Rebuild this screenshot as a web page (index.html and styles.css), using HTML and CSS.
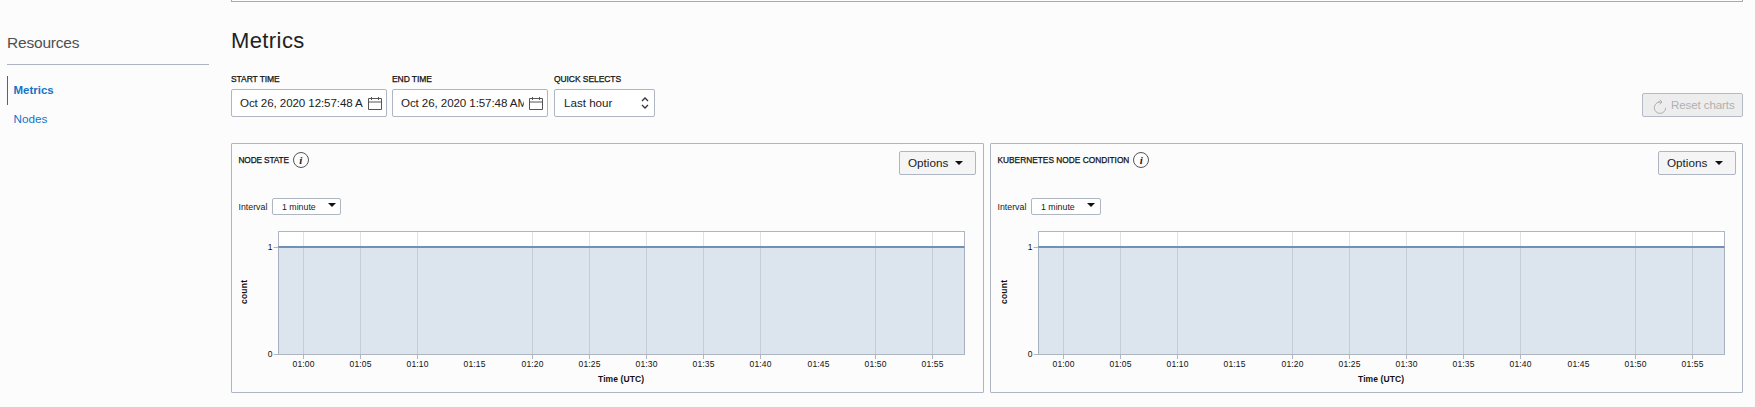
FILE: index.html
```html
<!DOCTYPE html>
<html lang="en">
<head>
<meta charset="utf-8">
<title>Metrics</title>
<link rel="stylesheet" href="styles.css">
</head>
<body>
<div class="page">
  <aside class="sidebar">
    <h2 class="sidebar-title">Resources</h2>
    <nav class="nav">
      <a class="nav-item active">Metrics</a>
      <a class="nav-item">Nodes</a>
    </nav>
  </aside>
  <main class="main">
    <div class="panel-end"></div>
    <h1 class="title">Metrics</h1>
    <div class="toolbar">
      <div class="field">
        <label class="label">START TIME</label>
        <div class="input"><span class="value">Oct 26, 2020 12:57:48 A</span><svg class="cal" width="14" height="13" viewBox="0 0 14 13"><path d="M.5 1.5h13v11H.5zM.5 5h13M3.5 0v3M10.5 0v3"/></svg></div>
      </div>
      <div class="field">
        <label class="label">END TIME</label>
        <div class="input"><span class="value">Oct 26, 2020 1:57:48 AM</span><svg class="cal" width="14" height="13" viewBox="0 0 14 13"><path d="M.5 1.5h13v11H.5zM.5 5h13M3.5 0v3M10.5 0v3"/></svg></div>
      </div>
      <div class="field quick">
        <label class="label">QUICK SELECTS</label>
        <div class="input select"><span class="value">Last hour</span><svg class="updown" width="8" height="12" viewBox="0 0 8 12"><path d="M1 4l3-3 3 3M1 8l3 3 3-3"/></svg></div>
      </div>
      <button class="reset"><svg width="14" height="15" viewBox="0 0 14 15"><path d="M7 3a5.7 5.7 0 1 0 5.7 5.7M4.9 3H9M6.6.6L9 3 6.6 5.4"/></svg><span>Reset charts</span></button>
    </div>
    <div class="charts">
      <section class="card">
        <header class="card-head">
          <h3 class="card-title">NODE STATE</h3><span class="info">i</span>
          <button class="options"><span>Options</span><i class="caret"></i></button>
        </header>
        <div class="interval"><span>Interval</span><div class="mini"><span>1 minute</span><i class="caret"></i></div></div>
        <svg class="chart" width="751" height="166"></svg>
      </section>
      <section class="card second">
        <header class="card-head">
          <h3 class="card-title">KUBERNETES NODE CONDITION</h3><span class="info">i</span>
          <button class="options"><span>Options</span><i class="caret"></i></button>
        </header>
        <div class="interval"><span>Interval</span><div class="mini"><span>1 minute</span><i class="caret"></i></div></div>
        <svg class="chart" width="751" height="166"></svg>
      </section>
    </div>
  </main>
</div>
<script src="charts.js"></script>
</body>
</html>
```
FILE: styles.css
```css
* { box-sizing: border-box; }
body { margin: 0; background: #fcfcfc; color: #222; font-family: "Liberation Sans", Arial, sans-serif; overflow: hidden; }
h1, h2, h3 { margin: 0; font-weight: 400; }
button { font-family: inherit; margin: 0; }
.page { display: flex; height: 407px; padding-left: 7px; padding-right: 12px; }
.sidebar { width: 202px; margin-right: 22px; padding-top: 32px; }
.sidebar-title { height: 33px; line-height: 22px; border-bottom: 1px solid #adb5c0; font-size: 15.5px; letter-spacing: -.2px; color: #505050; }
.nav { display: flex; flex-direction: column; margin-top: 11px; }
.nav-item { height: 29px; line-height: 27px; padding-left: 6.5px; font-size: 11.7px; color: #1474c8; }
.active { font-weight: 700; border-left: 1px solid #1474c8; padding-left: 5.5px; font-size: 11.5px; line-height: 29px; }
.main { flex: 1; display: flex; flex-direction: column; }
.panel-end { height: 2px; border: 1px solid #aaa; border-top: 0; }
.title { margin-top: 24px; height: 28px; line-height: 29px; font-size: 22px; letter-spacing: .4px; color: #222; }
.toolbar { display: flex; height: 64px; margin-top: 20px; }
.field { width: 156px; margin-right: 5px; }
.quick { width: 101px; margin-left: 1px; }
.label { display: block; height: 15px; line-height: 11px; font-size: 8.5px; letter-spacing: -.08px; color: #111; -webkit-text-stroke: .25px #111; white-space: nowrap; }
.input { display: flex; align-items: center; height: 28px; border: 1px solid #aeb6c2; border-radius: 2px; background: #fff; padding: 0 4px 0 8px; font-size: 11.6px; }
.value { flex: 1; width: 122px; overflow: hidden; white-space: nowrap; margin-right: 5px; padding-bottom: 2px; letter-spacing: -.1px; }
.cal { fill: none; stroke: #555; flex: none; }
.select { padding-left: 9px; padding-right: 5px; }
.select .value { letter-spacing: 0; }
.updown { fill: none; stroke: #333; stroke-width: 1.3; }
.reset { display: flex; align-items: center; margin-left: auto; margin-top: 19px; width: 101px; height: 24px; padding: 0 0 0 10px; gap: 4px; border: 1px solid #b4bbc6; border-radius: 2px; background: #ededed; color: #b0b0b0; font-size: 11.5px; letter-spacing: -.08px; white-space: nowrap; }
.reset svg { fill: none; stroke: #b0b0b0; flex: none; margin-top: 2px; }
.charts { display: flex; gap: 6px; margin-top: 5px; }
.card { width: 753px; height: 250px; border: 1px solid #aeb6c2; border-radius: 1px; overflow: hidden; }
.card-head { display: flex; align-items: flex-start; height: 54px; padding: 7px 7px 0 6.5px; }
.card-title { font-size: 8.3px; line-height: 18px; letter-spacing: -.14px; color: #111; -webkit-text-stroke: .25px #111; white-space: nowrap; }
.info { width: 16px; height: 16px; margin: 1px 0 0 4px; border: 1px solid #555; border-radius: 50%; font: italic bold 11px/14px "Liberation Serif", serif; text-align: center; }
.options { margin-left: auto; display: flex; align-items: center; justify-content: space-between; width: 77px; height: 24px; border: 1px solid #aeb6c2; border-radius: 2px; background: #f5f5f5; padding: 0 12px 0 8px; font-size: 11.7px; color: #222; }
.options span { padding-bottom: 2px; }
.second .card-head { padding-right: 6px; }
.second .card-title { letter-spacing: .02px; }
.second .options { width: 78px; }
.caret { border: 4px solid transparent; border-top-color: #111; border-bottom: 0; }
.interval { display: flex; align-items: center; height: 17px; margin-left: 6px; font-size: 8.8px; }
.interval > span { width: 34px; padding-left: .5px; }
.mini { display: flex; align-items: center; justify-content: space-between; width: 69px; height: 17px; border: 1px solid #aeb6c2; border-radius: 2px; background: #fff; padding: 0 4px 0 9px; }
.second .mini { width: 70px; padding-right: 5px; }
.mini .caret { margin-top: -3px; }
.chart { display: block; margin-top: 10px; }
.chart text { font-size: 8.5px; fill: #111; }
.chart .bold { font-weight: 700; }
.plot { fill: #fff; stroke: #aeb6c2; }
.grid { stroke: #e2e2e2; }
.tick { stroke: #aeb6c2; }
.area { fill: #5078a8; fill-opacity: .2; }
.series { stroke: #7090b8; stroke-width: 2; }
```
FILE: charts.js
```javascript
const NS = 'http://www.w3.org/2000/svg';
document.querySelectorAll('.chart').forEach((svg, n) => {
  const left = n ? 47.5 : 46.5;
  const add = (name, attrs, text) => {
    const el = document.createElementNS(NS, name);
    for (const key in attrs) el.setAttribute(key, attrs[key]);
    if (text) el.textContent = text;
    svg.appendChild(el);
  };
  const line = (cls, x1, y1, x2, y2) => add('line', { class: cls, x1, y1, x2, y2 });
  add('rect', { class: 'plot', x: left, y: 6.5, width: 686, height: 123 });
  for (let i = 0; i < 12; i++) {
    const x = Math.floor(left + 24.8 + i * 57.2) + 0.5;
    if (i !== 3 && i !== 9) {
      line('grid', x, 7, x, 129);
      line('tick', x, 130, x, 134);
    }
    add('text', { x: x, y: 142, 'text-anchor': 'middle', textLength: 22 }, '01:' + String(i * 5).padStart(2, '0'));
  }
  add('rect', { class: 'area', x: left, y: 22, width: 686, height: 107 });
  line('series', left - 0.5, 22, left + 686, 22);
  line('tick', left - 5, 22.5, left, 22.5);
  line('tick', left - 5, 129.5, left, 129.5);
  add('text', { x: left - 6, y: 25, 'text-anchor': 'end' }, '1');
  add('text', { x: left - 6, y: 132, 'text-anchor': 'end' }, '0');
  add('text', { class: 'bold', x: left + 342.5, y: 157, 'text-anchor': 'middle', textLength: 46 }, 'Time (UTC)');
  add('text', { class: 'bold', 'text-anchor': 'middle', textLength: 24, transform: `translate(${left - 32},67) rotate(-90)` }, 'count');
});
```
